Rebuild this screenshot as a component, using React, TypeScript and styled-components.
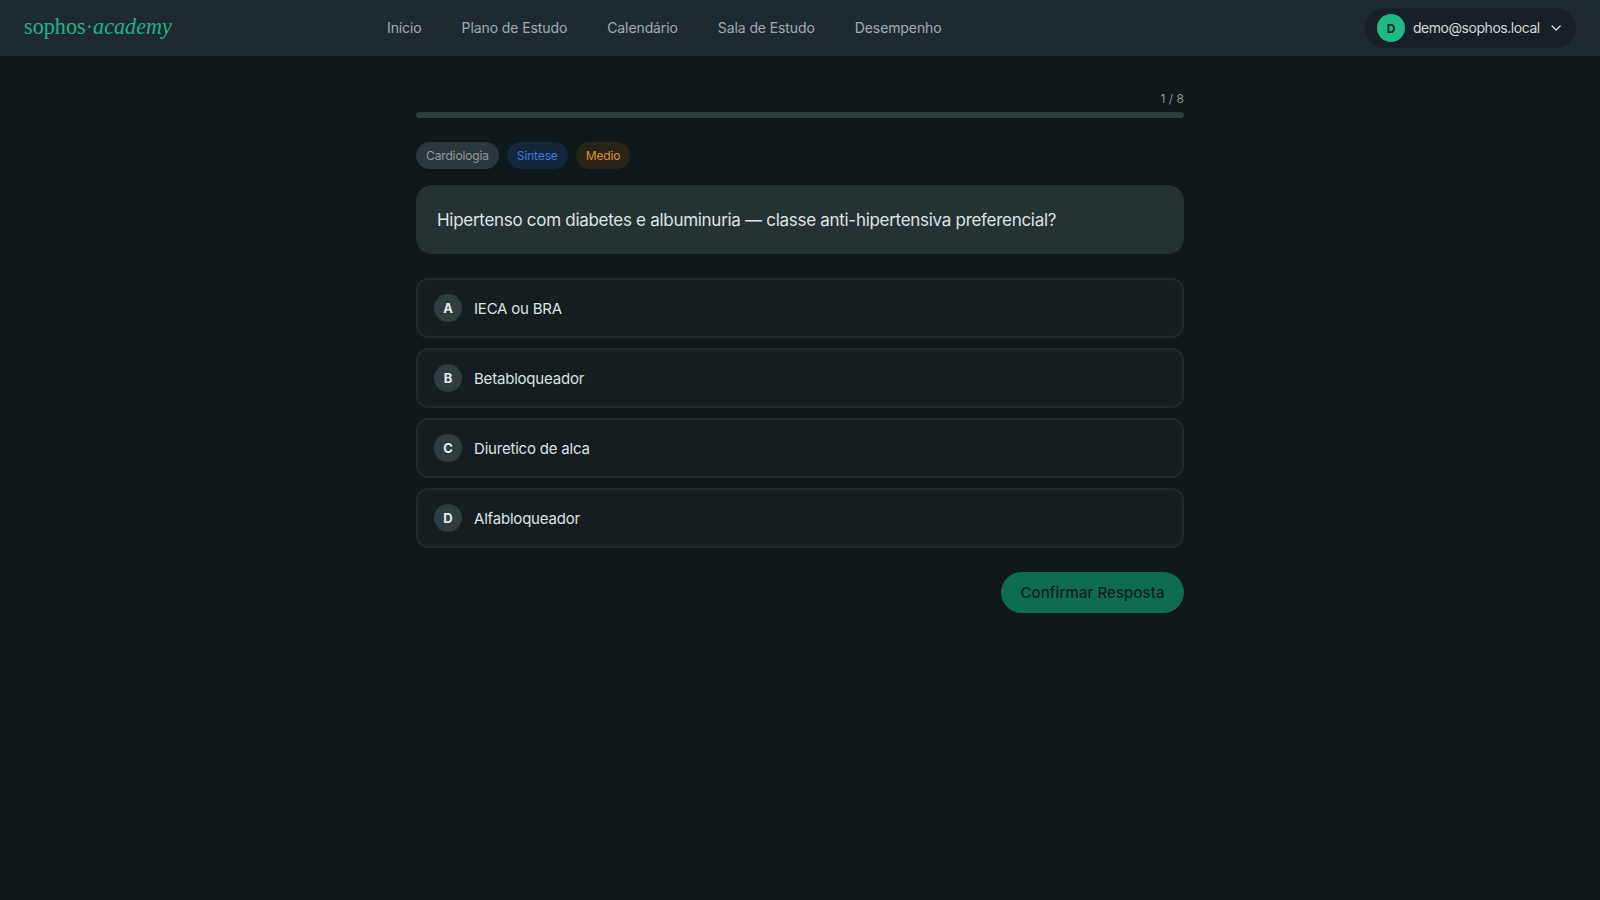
import React from "react";
import styled, { createGlobalStyle } from "styled-components";
import { ChevronDown } from "lucide-react";

const Global = createGlobalStyle`
  html, body { margin: 0; padding: 0; background: #0f181a; }
  body { font-family: Inter, "Noto Sans", sans-serif; min-height: 100vh; }
  * { box-sizing: border-box; }
`;

const Header = styled.header`
  height: 56px;
  background: #1f2a30;
  display: flex;
  align-items: center;
  padding: 0 24px;
`;
const Logo = styled.div`
  width: 363px;
  padding-bottom: 3px;
  font-family: "Liberation Serif", serif;
  font-size: 22.2px;
  color: #1fb385;
  em { font-style: italic; }
`;
const Nav = styled.nav`
  display: flex;
  gap: 40px;
  flex: 1;
  padding-bottom: 2px;
`;
const NavLink = styled.a`
  font-size: 14px;
  letter-spacing: -0.1px;
  color: #a0acb0;
`;
const UserPill = styled.div`
  flex: none;
  width: 211px;
  height: 40px;
  border-radius: 20px;
  background: #172024;
  display: flex;
  align-items: center;
  padding: 0 12px;
  gap: 8px;
`;
const Avatar = styled.div`
  flex: none;
  width: 28px;
  height: 28px;
  border-radius: 50%;
  background: #1fb985;
  color: #0f2a24;
  font-size: 12px;
  font-weight: 700;
  display: flex;
  align-items: center;
  justify-content: center;
`;
const Email = styled.span`
  flex: 1;
  font-size: 14px;
  letter-spacing: -0.46px;
  padding-bottom: 1px;
  color: #d3dadc;
`;
const Main = styled.main`
  width: 768px;
  margin: 0 auto;
  padding-top: 35px;
`;
const Count = styled.div`
  text-align: right;
  font-size: 12px;
  line-height: 16px;
  color: #8b9699;
  margin-bottom: 5px;
`;
const Track = styled.div`
  height: 6px;
  border-radius: 3px;
  background: #2f3d3f;
  margin-bottom: 24px;
`;
const Tags = styled.div`
  display: flex;
  gap: 8px;
  margin-bottom: 16px;
`;
const Tag = styled.span<{ $bg: string; $fg: string }>`
  height: 27px;
  padding: 0 10px;
  border-radius: 14px;
  display: flex;
  align-items: center;
  font-size: 12px;
  letter-spacing: -0.14px;
  background: ${(p) => p.$bg};
  color: ${(p) => p.$fg};
`;
const Question = styled.div`
  height: 69px;
  border-radius: 16px;
  background: #253133;
  padding: 0 21px;
  display: flex;
  align-items: center;
  font-size: 17px;
  letter-spacing: -0.29px;
  color: #dfe5e6;
  margin-bottom: 24px;
`;
const Options = styled.div`
  display: flex;
  flex-direction: column;
  gap: 10px;
  margin-bottom: 24px;
`;
const Option = styled.div`
  height: 60px;
  border: 2px solid #1f2a2c;
  border-radius: 12px;
  background: #151d20;
  display: flex;
  align-items: center;
  padding: 0 16px;
  gap: 12px;
`;
const Letter = styled.span`
  flex: none;
  width: 28px;
  height: 28px;
  border-radius: 50%;
  background: #2f3d3f;
  color: #e6ecec;
  font-size: 13px;
  font-weight: 700;
  display: flex;
  align-items: center;
  justify-content: center;
`;
const OptionText = styled.span`
  font-size: 15px;
  letter-spacing: -0.2px;
  color: #dde3e4;
`;
const Actions = styled.div`
  display: flex;
  justify-content: flex-end;
`;
const Confirm = styled.button`
  width: 183px;
  height: 41px;
  border: none;
  border-radius: 21px;
  background: #0f6b52;
  color: #0e1f1d;
  font-family: inherit;
  font-size: 15px;
  font-weight: 500;
  letter-spacing: 0.08px;
`;

export default function App() {
  return (
    <>
      <Global />
      <Header>
        <Logo>sophos·<em>academy</em></Logo>
        <Nav>
          {["Início", "Plano de Estudo", "Calendário", "Sala de Estudo", "Desempenho"].map((n) => (
            <NavLink key={n}>{n}</NavLink>
          ))}
        </Nav>
        <UserPill>
          <Avatar>D</Avatar>
          <Email>demo@sophos.local</Email>
          <ChevronDown size={18} color="#d3dadc" />
        </UserPill>
      </Header>
      <Main>
        <Count>1 / 8</Count>
        <Track />
        <Tags>
          <Tag $bg="#2b373a" $fg="#8f9b9e">Cardiologia</Tag>
          <Tag $bg="#14263a" $fg="#3f7ad8">Sintese</Tag>
          <Tag $bg="#2a2418" $fg="#d9952e">Medio</Tag>
        </Tags>
        <Question>Hipertenso com diabetes e albuminuria — classe anti-hipertensiva preferencial?</Question>
        <Options>
          {[["A", "IECA ou BRA"], ["B", "Betabloqueador"], ["C", "Diuretico de alca"], ["D", "Alfabloqueador"]].map(([l, t]) => (
            <Option key={l}>
              <Letter>{l}</Letter>
              <OptionText>{t}</OptionText>
            </Option>
          ))}
        </Options>
        <Actions>
          <Confirm>Confirmar Resposta</Confirm>
        </Actions>
      </Main>
    </>
  );
}
